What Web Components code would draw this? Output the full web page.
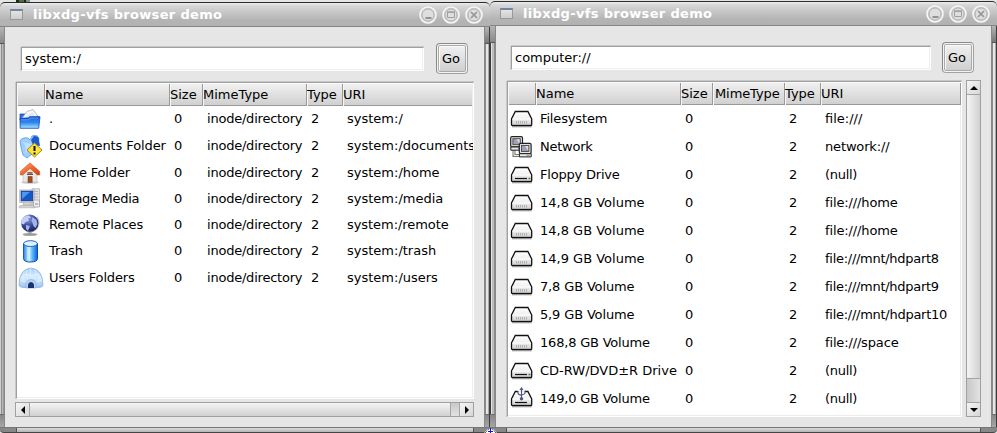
<!DOCTYPE html>
<html lang="en"><head><meta charset="utf-8"><title>libxdg-vfs browser demo</title>
<style>
html,body{margin:0;height:433px;overflow:hidden}
body{background:#e4e4e4;font:13px/16px "DejaVu Sans",sans-serif;color:#000}
main{display:grid;grid-template-columns:490px 507px;height:433px}
desk-mark{position:absolute}
</style></head><body>
<main>
<vfs-window class="w" kind="system" path="system:/"></vfs-window>
<vfs-window class="w" kind="computer" path="computer://"></vfs-window>
</main>
<desk-mark kind="top" style="left:16px;top:0"></desk-mark>
<desk-mark kind="bottom" style="left:484px;top:427px"></desk-mark>
<script>
const el=(name,html)=>customElements.define(name,class extends HTMLElement{
  connectedCallback(){
    if(this.shadowRoot)return;
    this.attachShadow({mode:'open'}).innerHTML=typeof html==='function'?html(this):html;
  }
});

/* scraps of the desktop that show between and above the windows */
el('desk-mark',h=>`<style>:host{display:block}svg{display:block}</style>${h.getAttribute('kind')==='top'
?'<svg width="15" height="2"><path d="M0 0h10v2H0z" fill="#1c2a1a"/><path d="M3 0h5v2H3z" fill="#4c7040"/><path d="M10 0h4v2h-4z" fill="#8c8c8c"/></svg>'
:'<svg width="13" height="6"><path d="M0 6l4-4h5l4 4z" fill="#fff"/><path d="M1 6l4-4M12 6L8 2" stroke="#222" stroke-dasharray="1 1"/><path d="M6.5 1v5M4 4.5h5" stroke="#1414e0"/></svg>'}`);

const defs=`<defs>
<linearGradient id="f" x1="0" y1="0" x2="0" y2="1"><stop offset="0" stop-color="#1c62d8"/><stop offset=".5" stop-color="#2f86ee"/><stop offset="1" stop-color="#a4e4ff"/></linearGradient>
<linearGradient id="g" x1="0" y1="0" x2="0" y2="1"><stop offset="0" stop-color="#fff"/><stop offset=".5" stop-color="#f0f0f0"/><stop offset="1" stop-color="#cfcfcf"/></linearGradient>
<linearGradient id="r" x1="0" y1="0" x2="1" y2="1"><stop offset="0" stop-color="#ffb080"/><stop offset=".5" stop-color="#ef6a30"/><stop offset="1" stop-color="#d03c08"/></linearGradient>
<linearGradient id="t" x1="0" y1="0" x2="1" y2="0"><stop offset="0" stop-color="#2e8cec"/><stop offset=".4" stop-color="#c8f0ff"/><stop offset=".65" stop-color="#58b4f8"/><stop offset="1" stop-color="#0d5fd8"/></linearGradient>
<linearGradient id="i" x1="0" y1="0" x2="0" y2="1"><stop offset="0" stop-color="#a8d2ff"/><stop offset=".5" stop-color="#d8ecff"/><stop offset="1" stop-color="#9cc6f4"/></linearGradient>
<radialGradient id="e" cx=".4" cy=".25" r=".8"><stop offset="0" stop-color="#8c9ce0"/><stop offset=".5" stop-color="#3d4c9c"/><stop offset="1" stop-color="#141e58"/></radialGradient>
</defs>`;
const drive='<path d="M2 18.5h20" stroke="#c4c4c4" stroke-width="2"/><path d="M5.3 3.5h12.6l3.8 7.5v5.5q0 1-1 1h-18.2q-1 0-1-1V11z" fill="url(#g)" stroke="#111" stroke-width="1.3"/><path d="M2.5 11h18.2" stroke="#fff"/><path d="M2.5 16.5h18" stroke="#b4b4b4"/>';
const pc='<rect x=".7" y=".7" width="11.8" height="10.2" rx="1.4" fill="#e8e8e4" stroke="#222" stroke-width="1.2"/><rect x="2.9" y="2.7" width="7.4" height="6" fill="#a0a0b8" stroke="#444" stroke-width=".9"/><path d="M6.5 3.2l3 4.5V3.2z" fill="#dedeec"/><path d="M.8 11h11.8v3.2H.8z" fill="#e8e8e4" stroke="#222"/><path d="M8 12.6h3" stroke="#888"/>';
const icons={
folder:'<g transform="translate(0 1)"><path d="M1 5h6l2 2h10v4H1z" fill="#2b70e0" stroke="#1340a4" stroke-width=".7"/><path d="M3 9L8 2.5 14 .5l5 7z" fill="#f2f6ff" stroke="#8a94b4" stroke-width=".6"/><path d="M7 8l7-4M9 9l6-3.4" stroke="#bcc6dc" stroke-width=".6"/><path d="M1 9.5h8l1.5-1.8H21l-1.3 11.6H1.2z" fill="url(#f)" stroke="#1344b0" stroke-width=".8"/><path d="M2 10.8h8l1-1.7h8" stroke="#6ab0ff" fill="none" stroke-width=".6"/></g>',
docs:'<path d="M1 6Q3 2 9 3l2 2 2-4q5-2 7 2l-2 12L8 23 4 20Q2 14 1 6z" fill="#9cceff" stroke="#5b96dc" stroke-width=".8"/><path d="M12 5l3-4q5 0 5 4l1 6-7-1z" fill="#1d59d2"/><path d="M3 7q5 3 3 12l7-10" fill="#cbe8ff" opacity=".7"/><path d="M15.5 8L23 15l-7.5 7L8 15z" fill="#ffe43c" stroke="#a68a00" stroke-width="1"/><path d="M15.5 11v5M15.5 17.5v2" stroke="#111" stroke-width="2"/>',
home:'<ellipse cx="11" cy="20.5" rx="9" ry="1.3" fill="#ccc"/><path d="M4 10l7-6 7 6v10H4z" fill="#e8e8e8" stroke="#bbb" stroke-width=".6"/><path d="M11 .8L1.3 9.4v3.6h2.4L11 6.4l7.3 6.6h2.4V9.4z" fill="url(#r)" stroke="#c64a18" stroke-width=".5"/><path d="M9 14.5h4.2v6H9z" fill="#a44c22" stroke="#6c2c10" stroke-width=".5"/><path d="M8.5 11.8V10h5v1.8z" fill="#b85c34"/><path d="M8 12.4h6" stroke="#444"/>',
media:'<rect x="13" y=".8" width="7.5" height="18" fill="#e2e2e2" stroke="#aaa" stroke-width=".7"/><path d="M14 3.5h5M14 6h5M14 9h5" stroke="#b4b4b4"/><rect x=".8" y="2" width="14.4" height="12.5" fill="#d8dce4" stroke="#a4a4ac" stroke-width=".7"/><rect x="2.2" y="3.2" width="11.6" height="9.6" fill="#1657c4" stroke="#0a2f8a" stroke-width=".7"/><path d="M3 4h8L3 11z" fill="#4898f4"/><path d="M5 14h6l2 3H4zM1 17.5h14l1 2.3H0z" fill="#d4d4d4" stroke="#aaa" stroke-width=".6"/><rect x="14.5" y="12" width="6" height="7" rx="1" fill="#eee" stroke="#999" stroke-width=".7"/><path d="M16 15h3v2h-3z" fill="#bbb"/>',
globe:'<ellipse cx="11" cy="20.5" rx="7.5" ry="1.6" fill="#aaa"/><path d="M9.5 17h3v3h4v1H5.5v-1h4z" fill="#999"/><path d="M18 3q4 6-.5 12-4 4-10 2.5" fill="none" stroke="#b4b8c0" stroke-width="1.3"/><circle cx="10.8" cy="9.2" r="8.6" fill="url(#e)"/><path d="M3 5q3-4 7-3.5l2 2-3 1 1 2-4 2-1 2-3-1z" fill="#c2cff8"/><path d="M13.5 3l4 3 1 4-2 4-2-2-1-3-1-2zM7 11l4 1-2 5-2-2z" fill="#a5b4e8"/>',
trash:'<path d="M4.6 3.6v15Q4.6 22 11.5 22t7-3.4v-15z" fill="url(#t)" stroke="#0a4cc0" stroke-width="1"/><ellipse cx="11.5" cy="3.6" rx="6.9" ry="2.9" fill="#dff2ff" stroke="#1764cc" stroke-width="1"/><path d="M9.5 7v13" stroke="#e8faff" stroke-width="3" opacity=".4"/>',
igloo:'<path d="M0 18.5Q0 2 12 1q12 1 12 17.5-1 2-5 2H5q-4 0-5-2z" fill="url(#i)" stroke="#8bb2e0" stroke-width=".8"/><path d="M4 7q8 3 16 0M1 13q3 2 8 2M15 15q5 0 8-2M8 3l-1 6M16 3l1 6M4 8v6M20 8v6M11.5 1.5V9" stroke="#f0f8ff" fill="none" stroke-width=".6"/><path d="M7 21v-5q1-3.5 5-3.5t5 3.5v5z" fill="#b8d6fa" stroke="#86ace0" stroke-width=".7"/><path d="M9 21v-3.5q.5-2.5 3-2.5t3 2.5V21z" fill="#17346e"/>',
drive:drive+'<path d="M6.5 13v2.6m2-2.6v2.6m2-2.6v2.6m2-2.6v2.6m2-2.6v2.6m2-2.6v2.6" stroke="#b0b0b0"/>',
removable:drive+'<path d="M5 14.5h12" stroke="#111" stroke-width="1.2"/><path d="M18.5 14.5h2" stroke="#5b744e" stroke-width="1.4"/>',
usb:drive+'<path d="M8 1h7v7H8z" fill="#fff" opacity=".9"/><path d="M5 14.5h12" stroke="#111" stroke-width="1.2"/><path d="M11.5 11V.5M8 3v2q0 1.6 3.5 2.4M15 2.5v2.5q0 1-3.5 2M10 2l1.5-2L13 2" fill="none" stroke="#55557c" stroke-width="1.1"/><circle cx="11.5" cy="10.7" r="1.7" fill="#55557c"/>',
network:'<path d="M4 14v5.5h6" fill="none" stroke="#777" stroke-width="3"/><path d="M4 14v5.5h6" fill="none" stroke="#eee"/>'+pc+'<g transform="translate(8.6 6.7)">'+pc+'</g>'
};
el('file-icon',h=>`<style>:host{display:block;width:24px;height:22px}svg{display:block;overflow:visible}</style><svg width="24" height="22" viewBox="0 0 24 22">${defs}${icons[h.getAttribute('name')]}</svg>`);

el('title-button',h=>`<style>:host{display:block;width:18px;height:18px}svg{display:block}</style><svg width="18" height="18" viewBox="0 0 18 18"><circle cx="9" cy="9" r="8" fill="#cacaca" stroke="#f6f6f6" stroke-width="1.6"/><circle cx="9" cy="9" r="6" fill="#dedede" stroke="#b4b4b4" stroke-width="1"/>${{
min:'<path d="M6.5 12h6" stroke="#929292" stroke-width="2"/>',
max:'<path d="M5.5 6h7v5.5h-7z" fill="none" stroke="#a0a0a0"/><path d="M5 6.2h8" stroke="#a0a0a0" stroke-width="1.4"/>',
close:'<path d="M6 6l6 6m0-6l-6 6" stroke="#969696" stroke-width="1.7"/>'}[h.getAttribute('kind')]}</svg>`);

el('title-bar',`<style>
:host{display:flex;align-items:center;box-sizing:border-box;border-top:1px solid #2c2c2c;border-bottom:1px solid #858585;background:linear-gradient(#ededed 0,#d6d6d6 3px,#b4b4b4 17px,#b2b2b2);padding:0 7px 0 10px;border-radius:5px 5px 0 0}
i{box-sizing:border-box;width:13px;height:11px;border:1px solid #999;border-top:2px solid #72859f;background:linear-gradient(#e4e4e4,#cdcdcd);margin-right:10px}
span{flex:1;color:#fff;font-weight:bold;font-size:13px;line-height:16px;letter-spacing:.33px;white-space:nowrap}
nav{display:flex;gap:5px}</style>
<i></i><span><slot></slot></span><nav><title-button kind="min"></title-button><title-button kind="max"></title-button><title-button kind="close"></title-button></nav>`);

el('path-field',`<style>:host{display:block;box-sizing:border-box;height:24px;background:#fff;border:1px solid #fff;border-top-color:#a0a0a0;border-left-color:#a0a0a0;box-shadow:0 -1px #c8c8c8,-1px 0 #d0d0d0,inset -1px -1px #eee;padding:3px 0 0 3px;line-height:16px}</style><slot></slot>`);

el('go-button',`<style>:host{display:block;box-sizing:border-box;width:32px;height:31px;border:1px solid #a0a4a0;border-top-color:#888c88;border-left-color:#888c88;border-radius:4px;padding:1px;background:#f4f4f4}
b{display:flex;align-items:center;justify-content:center;box-sizing:border-box;height:27px;border:1px solid #aaa;border-radius:2px;background:linear-gradient(#f0f0f0,#cfcfcf);box-shadow:inset 1px 1px #fafafa;font-weight:normal;padding-right:2px}</style><b><slot></slot></b>`);

el('scroll-bar',h=>{
const v=h.getAttribute('dir')==='v';
return `<style>:host{display:flex;flex-direction:${v?'column':'row'};box-sizing:border-box;border:1px solid #a0a0a0;${v?'margin-top:-1px;':'margin-left:-1px;'}background:linear-gradient(${v?'90deg':'180deg'},#c8c8c8,#e2e2e2)}
span{box-sizing:border-box;flex:0 0 13px;display:grid;place-items:center;background:linear-gradient(135deg,#f6f6f6,#d6d6d6)}
div{box-sizing:border-box;flex:0 0 ${h.getAttribute('size')}px;border:0 solid #a4a4a4;border-${v?'top':'left'}-width:1px;border-${v?'bottom':'right'}-width:1px;background:linear-gradient(${v?'90deg':'180deg'},#f4f4f4,#cfd2cf)}
.e{border-${v?'top':'left'}:1px solid #a4a4a4;margin-${v?'top':'left'}:auto;flex-basis:14px}svg{display:block}</style>
<span><svg width="8" height="8"><path d="${v?'M0 6h8L4 2z':'M6 0v8L2 4z'}"/></svg></span><div></div><span class="e"><svg width="8" height="8"><path d="${v?'M0 2h8L4 6z':'M2 0v8L6 4z'}"/></svg></span>`});

/* letter spacing per label, in px */
const tight={'Documents Folder':-.1,'Home Folder':-.16,'Storage Media':-.3,'Remote Places':-.12,'Trash':-.1,'Users Folders':-.14,'inode/directory':-.22,'Filesystem':-.15,'Network':-.25,'Floppy Drive':-.2,
'168,8 GB Volume':-.2,'149,0 GB Volume':-.2,'5,9 GB Volume':-.15,'7,8 GB Volume':-.15,'file:///home':-.12,'file:///mnt/hdpart8':-.28,'file:///mnt/hdpart9':-.28,'file:///mnt/hdpart10':-.27,'file:///space':-.15,'(null)':-.3,'system:/remote':-.06,'network://':-.15};
const cell=t=>`<span class="t" style="letter-spacing:${tight[t]||0}px">${t}</span>`;
const S=(icon,name,uri,h=26)=>({icon,name,mime:'inode/directory',uri,h});
const C=(icon,name,uri)=>({icon,name,mime:'',uri,h:28});
const data={
system:[S('folder','.','system:/',25),S('docs','Documents Folder','system:/documents',29),S('home','Home Folder','system:/home'),S('media','Storage Media','system:/media'),S('globe','Remote Places','system:/remote'),S('trash','Trash','system:/trash'),S('igloo','Users Folders','system:/users',27)],
computer:[C('drive','Filesystem','file:///'),C('network','Network','network://'),C('removable','Floppy Drive','(null)'),C('drive','14,8 GB Volume','file:///home'),C('drive','14,8 GB Volume','file:///home'),C('drive','14,9 GB Volume','file:///mnt/hdpart8'),C('drive','7,8 GB Volume','file:///mnt/hdpart9'),C('drive','5,9 GB Volume','file:///mnt/hdpart10'),C('drive','168,8 GB Volume','file:///space'),C('removable','CD-RW/DVD±R Drive','(null)'),C('usb','149,0 GB Volume','(null)')]};

el('file-row',`<style>:host{display:grid;grid-template-columns:var(--cols);align-items:center;white-space:pre}</style><slot></slot>`);
el('file-list',h=>{
const k=h.getAttribute('kind');
return `<style>:host{display:block;box-sizing:border-box;background:#fff;border:1px solid #a0a0a0;border-right:1px solid #fff;border-bottom:1px solid #fff;box-shadow:0 -1px #c8c8c8,-1px 0 #c8c8c8,inset -1px -1px #ededed;overflow:hidden}
header{display:grid;grid-template-columns:var(--cols);height:23px;box-sizing:border-box;border-bottom:1px solid #999;border-top:1px solid #fafafa;background:linear-gradient(#f0f0f0,#cfd0cf);margin-right:${k==='system'?1:0}px}
header span{box-sizing:border-box;padding-left:0;line-height:22px;border-right:1px solid #999;box-shadow:inset 1px 0 #f8f8f8;white-space:nowrap}
header span:nth-child(4){padding-left:${k==='system'?0:2}px;letter-spacing:${k==='system'?0:-.1}px}
header span:last-child{border-right:${k==='system'?0:1}px solid #999}
.t{padding-left:4px}file-icon{margin-left:2px}</style>
<header>${['','Name','Size','MimeType','Type','URI'].map(x=>`<span>${x}</span>`).join('')}</header>
${data[k].map(r=>`<file-row style="height:${r.h}px"><file-icon name="${r.icon}"></file-icon>${[r.name,'0',r.mime,'2',r.uri].map(cell).join('')}</file-row>`).join('')}`});

el('vfs-window',h=>{
const s=h.getAttribute('kind')==='system';
return `<style>
:host{display:grid;box-sizing:border-box;height:433px;padding-top:${s?2:1}px;grid-template-rows:25px 1fr 6px;overflow:hidden;--cols:${s?'28px 125px 33px 104px 36px 1fr':'28px 145px 32px 72px 36px 1fr'}}
.mid{display:grid;grid-template-columns:${s?'4px 1fr 5px':'5px 1fr 5px'};min-height:0}
.side{background:linear-gradient(#b4b4b4 0,#888 16px,#555 16px,#555 17px,transparent 17px,transparent calc(100% - 13px),#555 calc(100% - 13px),#888 calc(100% - 12px),#a6a6a6),linear-gradient(90deg,${s?'#cfcfcf 0 1px,#8e8e8e 1px 2px,#b8b8b8 2px 3px,#999 3px':'#3c3c3c 0 1px,#e4e4e4 1px 2px,#bcbcbc 2px 4px,#8c8c8c 4px'})}
.side.r{box-sizing:border-box;background:linear-gradient(#b4b4b4 0,#777 16px,#555 16px,#555 17px,transparent 17px,transparent calc(100% - 13px),#555 calc(100% - 13px),#888 calc(100% - 12px),#a6a6a6),linear-gradient(90deg,#8a8a8a 0 1px,#e6e6e6 1px 3px,#aaa 3px 4px,#3c3c3c 4px);border-right:1px solid #3c3c3c}
.body{box-sizing:border-box;background:#e6e6e6;border-left:1px solid #888;border-right:1px solid #888;padding:16px 10px 0 11px;min-width:0;min-height:0;overflow:hidden}
.bar{display:grid;grid-template-columns:${s?'403px 32px':'420px 32px'};column-gap:${s?12:11}px;height:31px;align-items:center;margin-left:${s?5:4}px}
.list{display:grid;margin-top:8px;grid-template-columns:${s?'458px':'455px 15px'};grid-template-rows:${s?'317px 15px':'336px'};gap:${s?3:4}px}
.bottom{box-sizing:border-box;border-top:1px solid #777;border-bottom:1px solid #444;background:linear-gradient(90deg,#888 0 16px,#555 16px 17px,transparent 17px calc(100% - 17px),#555 calc(100% - 17px) calc(100% - 16px),#888 calc(100% - 16px)),linear-gradient(#ddd,#b4b4b4);border-radius:0 0 4px 4px}
</style>
<title-bar>libxdg-vfs browser demo</title-bar>
<div class="mid"><div class="side"></div><div class="body"><div class="bar"><path-field>${h.getAttribute('path')}</path-field><go-button>Go</go-button></div><div class="list"><file-list kind="${h.getAttribute('kind')}"></file-list><scroll-bar dir="${s?'h':'v'}" size="${s?422:285}"></scroll-bar></div></div><div class="side r"></div></div>
<div class="bottom"></div>`});
</script></body></html>
